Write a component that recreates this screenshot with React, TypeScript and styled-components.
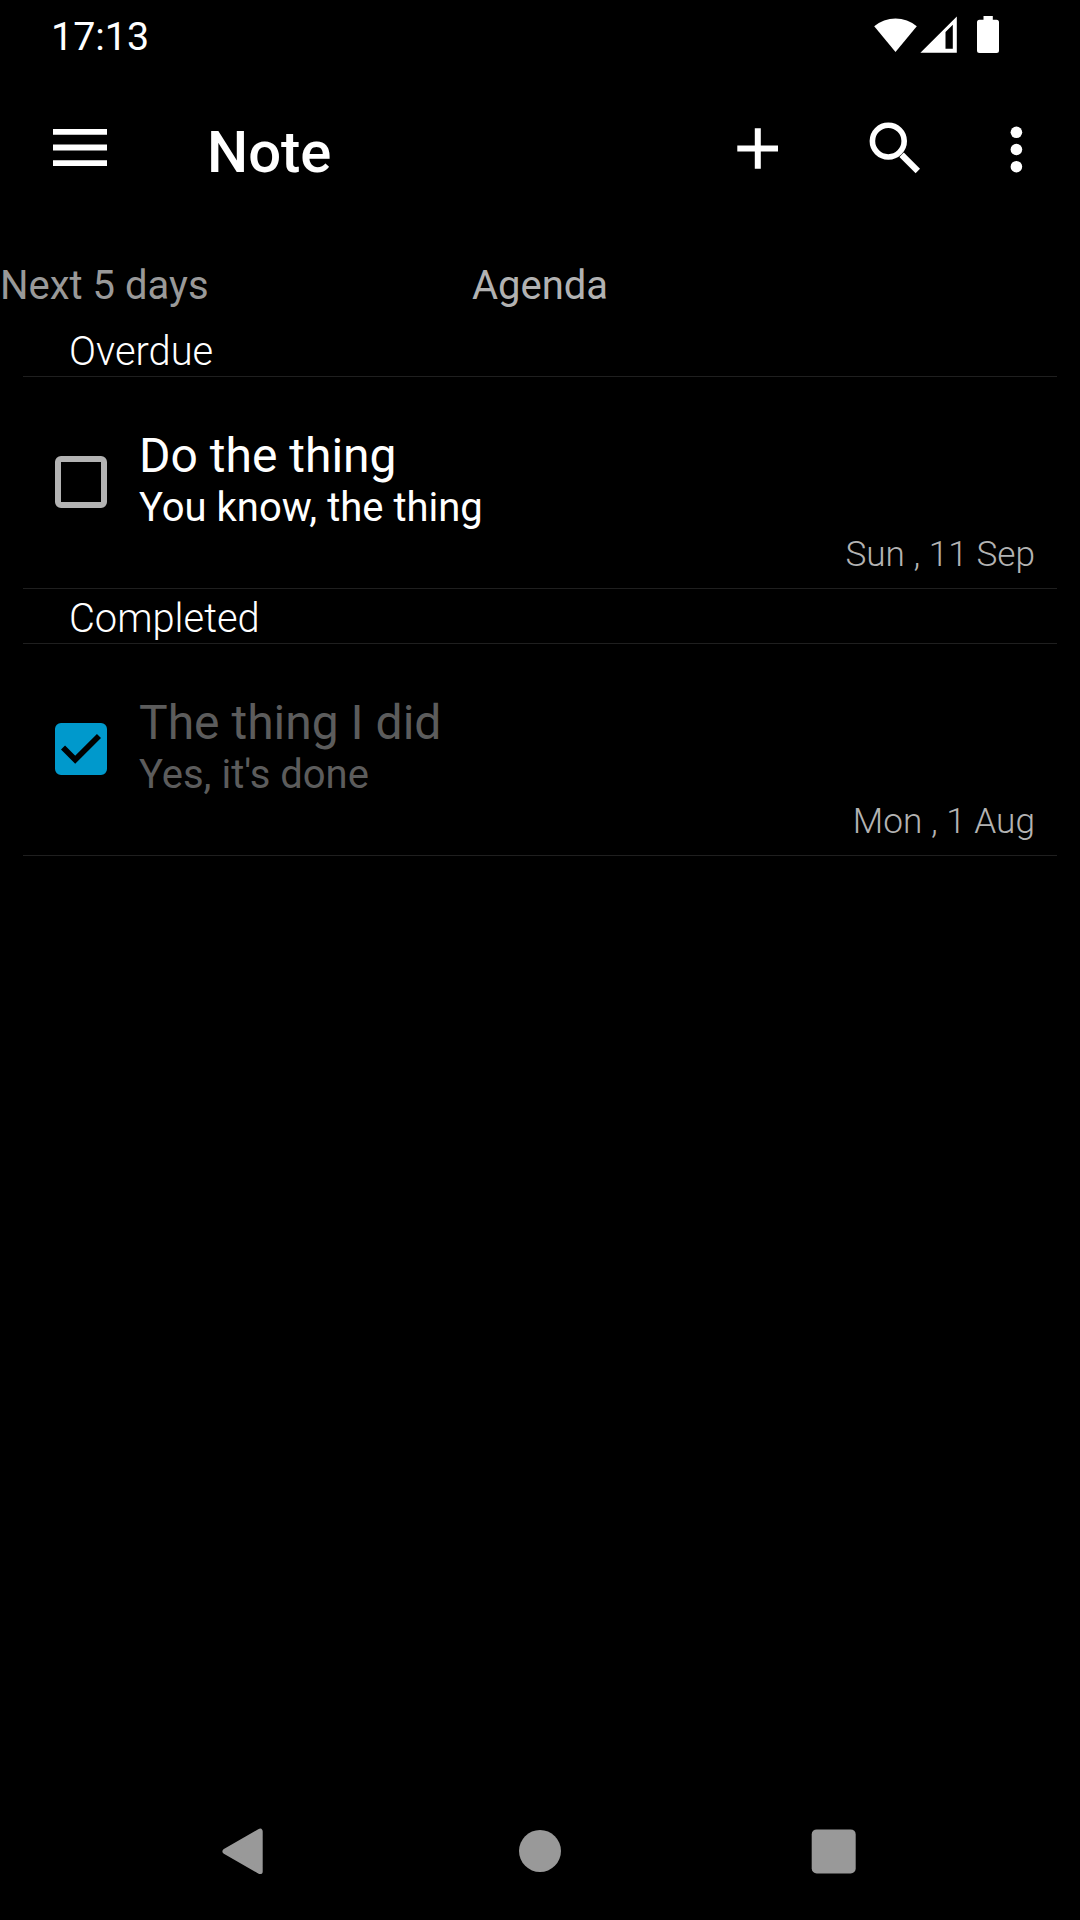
import React from "react";
import styled, { createGlobalStyle } from "styled-components";

const GlobalStyle = createGlobalStyle`
  *, *::before, *::after { box-sizing: border-box; }
  html, body { margin: 0; padding: 0; background: #000; }
  body { font-family: Roboto, "Noto Sans", sans-serif; color: #fff; }
`;

const Screen = styled.div`
  display: flex;
  flex-direction: column;
  width: 1080px;
  height: 1920px;
  overflow: hidden;
  background: #000;
`;

const StatusBar = styled.header`
  display: flex;
  align-items: center;
  justify-content: space-between;
  height: 72px;
  padding: 0 81px 0 51px;
`;

const Clock = styled.span`
  padding-top: 2px;
  font-size: 39.4px;
  line-height: 48px;
`;

const StatusIcons = styled.svg`
  display: block;
  width: 126px;
  height: 72px;
`;

const AppBar = styled.div`
  display: flex;
  align-items: center;
  height: 152px;
  padding: 0 28px 0 44px;
`;

const IconButton = styled.button`
  display: block;
  width: 72px;
  height: 72px;
  padding: 0;
  border: 0;
  background: none;
  color: #fff;

  svg { display: block; }
`;

const Title = styled.h1`
  flex: 1;
  margin: 0;
  padding: 8px 0 0 91px;
  font-size: 58px;
  font-weight: 500;
  line-height: 68px;
`;

const Actions = styled.div`
  display: flex;
`;

const ActionSlot = styled.div<{ $gap: number }>`
  margin-left: ${(p) => p.$gap}px;
`;

const TabStrip = styled.nav`
  display: grid;
  grid-template-columns: 1fr auto 1fr;
  height: 98px;
  padding-top: 38px;
`;

const Tab = styled.span<{ $active?: boolean }>`
  font-size: 40px;
  line-height: 48px;
  white-space: nowrap;
  color: ${(p) => (p.$active ? "#b2b2b2" : "#999")};
`;

const List = styled.main`
  flex: 1;
  padding: 0 23px;
`;

const SectionHeader = styled.h2`
  height: 55px;
  margin: 0;
  padding: 6px 46px 0;
  border-bottom: 1px solid #1f1f1f;
  font-size: 39.85px;
  font-weight: 300;
  line-height: 47px;
`;

const Item = styled.article<{ $done: boolean }>`
  display: grid;
  grid-template-columns: 84px 1fr;
  column-gap: 32px;
  height: 212px;
  padding: 51px 22px 0 0;
  border-bottom: 1px solid #1f1f1f;
  color: ${(p) => (p.$done ? "#5c5c5c" : "#fff")};
`;

const CheckBox = styled.div<{ $done: boolean }>`
  width: 52px;
  height: 52px;
  margin: 28px 0 0 32px;
  border: 6px solid ${(p) => (p.$done ? "#0099cc" : "#b3b3b3")};
  border-radius: 6px;
  background: ${(p) => (p.$done ? "#0099cc" : "transparent")};

  svg { display: block; }
`;

const ItemBody = styled.div`
  display: flex;
  flex-direction: column;
`;

const ItemTitle = styled.div`
  font-size: 48px;
  line-height: 56px;
`;

const ItemNote = styled.div`
  font-size: 40px;
  line-height: 47px;
`;

const ItemDate = styled.time`
  align-self: flex-end;
  margin-top: -1px;
  color: #b3b3b3;
  font-size: 35.2px;
  font-weight: 300;
  line-height: 48px;
`;

const NavBar = styled.footer`
  display: flex;
  align-items: center;
  gap: 222px;
  height: 138px;
  padding-left: 210px;
`;

interface Task {
  title: string;
  note: string;
  date: string;
  done: boolean;
}

const sections: { name: string; tasks: Task[] }[] = [
  {
    name: "Overdue",
    tasks: [{ title: "Do the thing", note: "You know, the thing", date: "Sun , 11 Sep", done: false }],
  },
  {
    name: "Completed",
    tasks: [{ title: "The thing I did", note: "Yes, it's done", date: "Mon , 1 Aug", done: true }],
  },
];

function TaskRow({ task }: { task: Task }) {
  return (
    <Item $done={task.done}>
      <CheckBox $done={task.done}>
        {task.done && (
          <svg width="40" height="40" viewBox="0 0 40 40">
            <path d="M2 18.5 L14.2 30.7 L38 7" fill="none" stroke="#000" strokeWidth="5.8" />
          </svg>
        )}
      </CheckBox>
      <ItemBody>
        <ItemTitle>{task.title}</ItemTitle>
        <ItemNote>{task.note}</ItemNote>
        <ItemDate>{task.date}</ItemDate>
      </ItemBody>
    </Item>
  );
}

export default function App() {
  return (
    <Screen>
      <GlobalStyle />
      <StatusBar>
        <Clock>17:13</Clock>
        <StatusIcons viewBox="0 0 126 72" fill="#fff">
          <path d="M1.2 26.2 A33 33 0 0 1 43.8 26.2 L22.5 52 Z" />
          <path fillRule="evenodd" d="M47.4 52.7 L83.8 16.5 V52.7 Z M72.5 32 L79.8 24.7 V48.8 H72.5 Z" />
          <path d="M110.5 16 H119.8 V19.7 H123.5 Q126 19.7 126 22.2 V50.5 Q126 53 123.5 53 H106.5 Q104 53 104 50.5 V22.2 Q104 19.7 106.5 19.7 H110.5 Z" />
        </StatusIcons>
      </StatusBar>

      <AppBar>
        <IconButton aria-label="Menu">
          <svg width="72" height="72" fill="currentColor">
            <path d="M9 17h54v5.7H9zM9 32.6h54v5.8H9zM9 48.2h54v5.8H9z" />
          </svg>
        </IconButton>
        <Title>Note</Title>
        <Actions>
          <IconButton aria-label="Add">
            <svg width="72" height="72" fill="currentColor">
              <path d="M32.8 16.2h6v17.2h17.2v6.1H38.8v17.3h-6V39.5H15.3v-6.1h17.5z" />
            </svg>
          </IconButton>
          <ActionSlot $gap={64}>
            <IconButton aria-label="Search">
              <svg width="72" height="72" fill="none" stroke="currentColor">
                <circle cx="30.3" cy="29.1" r="15.9" strokeWidth="5.6" />
                <path d="M43.6 42.8 L59.8 59" strokeWidth="6.2" />
              </svg>
            </IconButton>
          </ActionSlot>
          <ActionSlot $gap={50}>
            <IconButton aria-label="More options">
              <svg width="72" height="72" fill="currentColor">
                <circle cx="36.4" cy="20.3" r="5.8" />
                <circle cx="36.4" cy="37.5" r="5.8" />
                <circle cx="36.4" cy="54.7" r="5.8" />
              </svg>
            </IconButton>
          </ActionSlot>
        </Actions>
      </AppBar>

      <TabStrip>
        <Tab>Next 5 days</Tab>
        <Tab $active>Agenda</Tab>
      </TabStrip>

      <List>
        {sections.map((section) => (
          <section key={section.name}>
            <SectionHeader>{section.name}</SectionHeader>
            {section.tasks.map((task) => (
              <TaskRow key={task.title} task={task} />
            ))}
          </section>
        ))}
      </List>

      <NavBar>
        <svg width="72" height="72" fill="#999" stroke="#999" strokeLinejoin="round">
          <path d="M15.2 36.3 L50 16.4 V56.4 Z" strokeWidth="5.4" />
        </svg>
        <svg width="72" height="72" fill="#999">
          <circle cx="36" cy="36" r="21" />
        </svg>
        <svg width="72" height="72" fill="#999">
          <rect x="13.7" y="14.4" width="44" height="44" rx="5" />
        </svg>
      </NavBar>
    </Screen>
  );
}
